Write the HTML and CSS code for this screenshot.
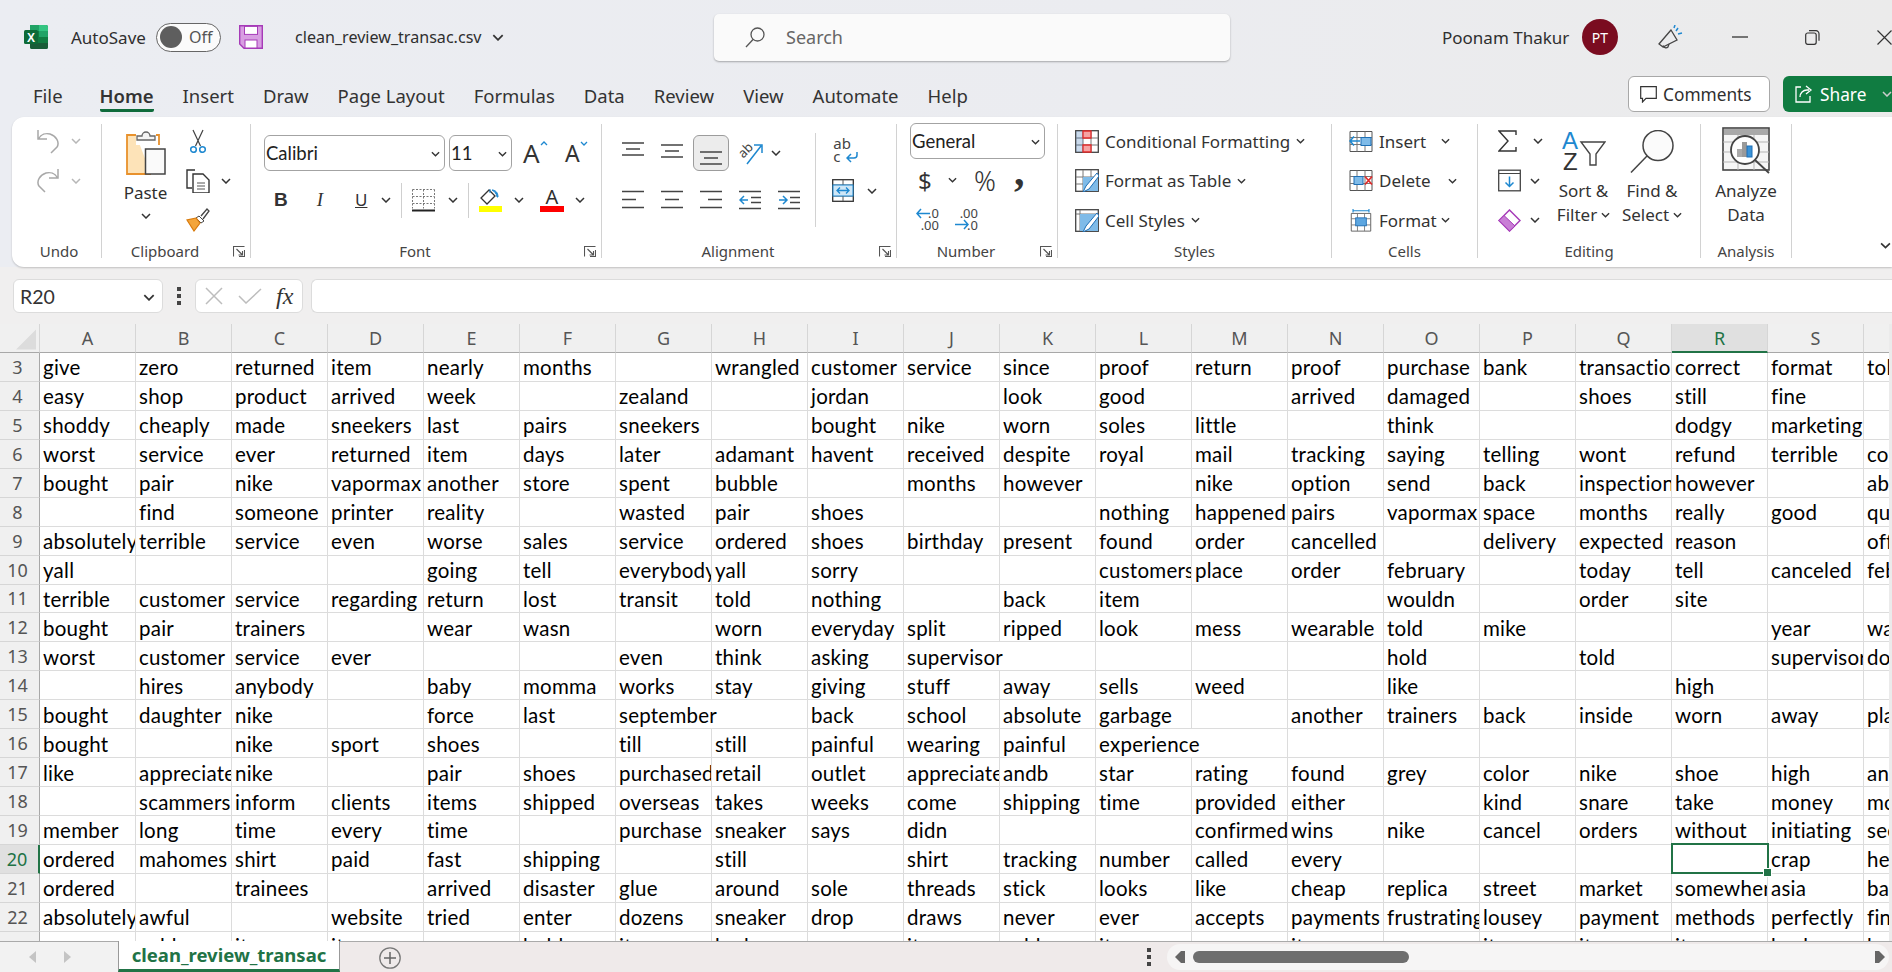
FILE: index.html
```html
<!DOCTYPE html>
<html lang="en">
<head>
<meta charset="utf-8">
<title>clean_review_transac.csv - Excel</title>
<link rel="stylesheet" href="styles.css">
</head>
<body>
<svg class="defs" aria-hidden="true">
  <symbol id="chev" viewBox="0 0 10 6"><path d="M1 1l4 4 4-4" fill="none" stroke="#333" stroke-width="1.5"/></symbol>
  <symbol id="launch" viewBox="0 0 12 11"><path d="M.5 10.500V.5h11M11.500 4v6.500H6M3.500 3l6 6M9.500 5v4h-4" fill="none" stroke="#555" stroke-width="1.1"/></symbol>
  <symbol id="lines-a" viewBox="0 0 22 20"><path d="M0 1.500h22M4 9.500h14M0 17.500h22" fill="none" stroke="#444" stroke-width="1.500"/></symbol>
  <symbol id="lines-l" viewBox="0 0 22 20"><path d="M0 1.500h22M0 9.500h14M0 17.500h22" fill="none" stroke="#444" stroke-width="1.500"/></symbol>
  <symbol id="lines-r" viewBox="0 0 22 20"><path d="M0 1.500h22M8 9.500h14M0 17.500h22" fill="none" stroke="#444" stroke-width="1.500"/></symbol>
  <symbol id="lines-v" viewBox="0 0 22 14"><path d="M0 1h22M4 7h14M0 13h22" fill="none" stroke="#444" stroke-width="1.500"/></symbol>
</svg>

<header class="title">
  <div class="title-left">
    <svg class="logo" viewBox="0 0 24 24"><rect x="6" width="18" height="24" rx="2" fill="#107c41"/><path d="M15 0h7a2 2 0 0 1 2 2v4h-9z" fill="#33c481"/><rect x="6" width="9" height="6" fill="#21a366"/><rect x="15" y="6" width="9" height="6" fill="#21a366"/><rect x="15" y="12" width="9" height="6" fill="#107c41"/><path d="M6 18h18v4a2 2 0 0 1-2 2H8a2 2 0 0 1-2-2z" fill="#185c37"/><rect y="5" width="14" height="14" rx="1.500" fill="#0e6b38"/><text x="7" y="16.500" class="logo-x">X</text></svg>
    <span class="autosave">AutoSave</span>
    <div class="toggle"><span class="knob"></span><span class="off">Off</span></div>
    <svg class="save" viewBox="0 0 24 24"><path d="M.7.700h22.600v22.600H5L.7 19z" fill="#d89ee2" stroke="#a63bb8" stroke-width="1.400"/><rect x="5.500" y="1.400" width="13" height="8" fill="#fff" stroke="#a63bb8"/><rect x="6" y="15" width="12" height="8" fill="#fff" stroke="#a63bb8"/></svg>
    <span class="filename">clean_review_transac.csv</span>
    <svg class="chev chev-file"><use href="#chev"/></svg>
  </div>
  <div class="search">
    <svg class="search-ico" viewBox="0 0 20 21"><circle cx="12.500" cy="7.500" r="6.500" fill="none" stroke="#555" stroke-width="1.300"/><path d="M8 12.500L1 20" stroke="#555" stroke-width="1.300"/></svg>
    <span>Search</span>
  </div>
  <div class="title-right">
    <span class="user">Poonam Thakur</span>
    <span class="avatar">PT</span>
    <svg class="feedback" viewBox="0 0 25 24"><path d="M13 5L1 19l4 3 14-7z" fill="none" stroke="#444" stroke-width="1.300"/><path d="M5 20.500a3 3 0 0 0 5 1.500l1-3" fill="none" stroke="#444" stroke-width="1.300"/><path d="M18 6l2-3M20 9l4-1M16 3l1-3" stroke="#1e88d0" stroke-width="1.500"/></svg>
    <svg class="minimize" viewBox="0 0 16 2"><path d="M0 1h16" stroke="#333" stroke-width="1.300"/></svg>
    <svg class="restore" viewBox="0 0 15 15"><rect x=".7" y="3" width="10.500" height="11.300" rx="2" fill="none" stroke="#333" stroke-width="1.200"/><path d="M4 .7h7a3 3 0 0 1 3 3v7" fill="none" stroke="#333" stroke-width="1.200"/></svg>
    <svg class="close" viewBox="0 0 15 15"><path d="M.5.500l14 14M14.500.500l-14 14" stroke="#333" stroke-width="1.200"/></svg>
  </div>
</header>

<nav class="tabs">
  <span class="tab">File</span>
  <span class="tab tab-on">Home</span>
  <span class="tab">Insert</span>
  <span class="tab">Draw</span>
  <span class="tab">Page Layout</span>
  <span class="tab">Formulas</span>
  <span class="tab">Data</span>
  <span class="tab">Review</span>
  <span class="tab">View</span>
  <span class="tab">Automate</span>
  <span class="tab">Help</span>
  <div class="tab-actions">
    <div class="btn-comments"><svg class="bubble" viewBox="0 0 17 17"><path d="M.7.700h15.600v11.600H6L2.500 16v-3.700H.7z" fill="none" stroke="#333" stroke-width="1.200"/></svg>Comments</div>
    <div class="btn-share"><svg class="share-ico" viewBox="0 0 18 18"><path d="M6 2H1v15h14v-6M5 12c0-4 3-7 7-7h2M11 1l5 4-5 4" fill="none" stroke="#fff" stroke-width="1.300"/></svg>Share<svg class="chev chev-share"><use href="#chev"/></svg></div>
  </div>
</nav>

<section class="ribbon">
  <div class="group g-undo">
    <div class="stack">
      <div class="row">
        <svg class="ico-undo" viewBox="0 0 22 25"><path d="M1 1v9h9M1.500 10C4 5 9 4 13 5c6 2 10 8 7 13l-6 6" fill="none" stroke="#a8a8a8" stroke-width="1.500"/></svg>
        <svg class="chev chev-grey"><use href="#chev"/></svg>
      </div>
      <div class="row">
        <svg class="ico-undo" viewBox="0 0 22 25"><path d="M21 1v9h-9M20.500 10C18 5 13 4 9 5 3 7-1 13 2 18l6 6" fill="none" stroke="#a8a8a8" stroke-width="1.500"/></svg>
        <svg class="chev chev-grey"><use href="#chev"/></svg>
      </div>
    </div>
    <div class="label">Undo</div>
  </div>

  <div class="group g-clip">
    <div class="clip-body">
      <div class="paste">
        <svg class="ico-paste" viewBox="0 0 40 45"><path d="M10 5H1v39h24" fill="#fde3b8" stroke="#e8912c" stroke-width="1.800"/><path d="M10 5h21v10H10z" fill="#fff"/><path d="M30 5h3v10" fill="none" stroke="#e8912c" stroke-width="1.800"/><path d="M11 10V6h5a4 4 0 0 1 8 0h5v4z" fill="#f4f4f4" stroke="#666" stroke-width="1.300"/><rect x="19.500" y="19" width="19.500" height="25" fill="#fafafa" stroke="#444" stroke-width="1.500"/></svg>
        <span class="paste-t">Paste</span>
        <svg class="chev"><use href="#chev"/></svg>
      </div>
      <div class="clip-tools">
        <svg class="ico-sc" viewBox="0 0 16 24"><path d="M3 1l7.500 16M13 1L5.500 17" stroke="#444" stroke-width="1.200" fill="none"/><circle cx="3.500" cy="20.500" r="2.800" fill="none" stroke="#1e88d0" stroke-width="1.500"/><circle cx="12.500" cy="20.500" r="2.800" fill="none" stroke="#1e88d0" stroke-width="1.500"/></svg>
        <div class="row"><svg class="ico-cp" viewBox="0 0 24 24"><path d="M9 1H1v18h5" fill="none" stroke="#333" stroke-width="1.400"/><path d="M7 5h10l6 6v13H7z" fill="#fff" stroke="#333" stroke-width="1.400"/><path d="M11 14h8M11 17h8M11 20h8" stroke="#555"/></svg><svg class="chev"><use href="#chev"/></svg></div>
        <svg class="ico-fp" viewBox="0 0 24 24"><path d="M13 8l5 5-3 2-5-5z" fill="#fff" stroke="#444"/><path d="M15 8l6-7 2 2-6 8" fill="none" stroke="#444" stroke-width="1.300"/><path d="M10 10L1 12l7 11 6-8z" fill="#f4a53a" stroke="#d87a0c" stroke-width="1.200"/></svg>
      </div>
    </div>
    <div class="label label-l">Clipboard<svg class="launch"><use href="#launch"/></svg></div>
  </div>

  <div class="group g-font">
    <div class="font-body">
      <div class="font-row">
        <div class="field f-name">Calibri<svg class="chev chev-end"><use href="#chev"/></svg></div>
        <div class="field f-size">11<svg class="chev chev-end"><use href="#chev"/></svg></div>
        <span class="grow">A<svg class="caret" viewBox="0 0 8 5"><path d="M1 4l3-3 3 3" fill="none" stroke="#1e88d0" stroke-width="1.300"/></svg></span>
        <span class="shrink">A<svg class="caret" viewBox="0 0 8 5"><path d="M1 1l3 3 3-3" fill="none" stroke="#1e88d0" stroke-width="1.300"/></svg></span>
      </div>
      <div class="font-row font-row2">
        <b class="fmt fmt-b">B</b>
        <i class="fmt fmt-i">I</i>
        <u class="fmt fmt-u">U</u>
        <svg class="chev"><use href="#chev"/></svg>
        <span class="vsep"></span>
        <svg class="ico-bd" viewBox="0 0 23 23"><path d="M.5.500h22M.5 7.500h22M.5 14.500h22M.5.500v19M11.500.500v19M22.500.500v19" fill="none" stroke="#777" stroke-dasharray="2 1.500"/><path d="M0 21.500h23" stroke="#222" stroke-width="2"/></svg>
        <svg class="chev"><use href="#chev"/></svg>
        <span class="vsep"></span>
        <div class="swatch"><svg class="ico-fill" viewBox="0 0 23 17"><path d="M10 2L2 10l6 6 8-8z" fill="#fff" stroke="#333" stroke-width="1.300"/><path d="M11 5V1M18 9c0-3-3-6-5-7 3 0 6 2 6 7z" fill="#1e88d0" stroke="#1e88d0"/></svg><span class="bar bar-y"></span></div>
        <svg class="chev"><use href="#chev"/></svg>
        <div class="swatch swatch-a"><span class="a-glyph">A</span><span class="bar bar-r"></span></div>
        <svg class="chev"><use href="#chev"/></svg>
      </div>
    </div>
    <div class="label label-l">Font<svg class="launch"><use href="#launch"/></svg></div>
  </div>

  <div class="group g-align">
    <div class="align-body">
      <div class="align-grid">
        <svg class="ic22 up" viewBox="0 0 22 14"><use href="#lines-v"/></svg>
        <svg class="ic22 mid" viewBox="0 0 22 14"><use href="#lines-v"/></svg>
        <div class="pressed"><svg class="ic22" viewBox="0 0 22 14"><use href="#lines-v"/></svg></div>
        <div class="orient"><svg class="ico-or" viewBox="0 0 25 24"><text x="2" y="14" class="or-t" transform="rotate(-45 8 12)">ab</text><path d="M9 23L23 5M16 4h8v8" fill="none" stroke="#1e88d0" stroke-width="1.500"/></svg><svg class="chev"><use href="#chev"/></svg></div>
        <span></span>
        <svg class="ic22" viewBox="0 0 22 20"><use href="#lines-l"/></svg>
        <svg class="ic22" viewBox="0 0 22 20"><use href="#lines-a"/></svg>
        <svg class="ic22" viewBox="0 0 22 20"><use href="#lines-r"/></svg>
        <svg class="ic22" viewBox="0 0 22 20"><path d="M0 1.500h22M12 7.500h10M12 12.500h10M0 18.500h22" fill="none" stroke="#444" stroke-width="1.500"/><path d="M9 10H1M5 6l-4 4 4 4" fill="none" stroke="#1e88d0" stroke-width="1.500"/></svg>
        <svg class="ic22" viewBox="0 0 22 20"><path d="M0 1.500h22M12 7.500h10M12 12.500h10M0 18.500h22" fill="none" stroke="#444" stroke-width="1.500"/><path d="M1 10h8M5 6l4 4-4 4" fill="none" stroke="#1e88d0" stroke-width="1.500"/></svg>
      </div>
      <div class="wrap-col">
        <div class="wrap-ico"><span class="wrap-t">ab<br>c</span><svg class="wrap-arrow" viewBox="0 0 12 11"><path d="M11 0v3a3 3 0 0 1-3 3H1M5 2L1 6l4 4" fill="none" stroke="#1e88d0" stroke-width="1.500"/></svg></div>
        <div class="row merge-row"><svg class="ico-mg" viewBox="0 0 22 23"><rect x=".7" y=".7" width="20.600" height="21.600" fill="#fff" stroke="#333" stroke-width="1.300"/><path d="M11 1v5M1 6h20M1 17h20M11 17v5" stroke="#555"/><rect x="1" y="6" width="20" height="11" fill="#cfe7f7" stroke="#1e88d0"/><path d="M5 11.500h12M8 8.500l-3 3 3 3M14 8.500l3 3-3 3" fill="none" stroke="#1e88d0" stroke-width="1.300"/></svg><svg class="chev"><use href="#chev"/></svg></div>
      </div>
    </div>
    <div class="label label-l">Alignment<svg class="launch"><use href="#launch"/></svg></div>
  </div>

  <div class="group g-num">
    <div class="num-body">
      <div class="field f-num">General<svg class="chev chev-end"><use href="#chev"/></svg></div>
      <div class="num-row">
        <span class="dollar">$</span><svg class="chev"><use href="#chev"/></svg>
        <span class="pct">%</span><span class="comma">,</span>
      </div>
      <div class="num-row num-row3">
        <div class="dec"><svg class="dec-a" viewBox="0 0 14 11"><path d="M14 5.500H1M5 1L1 5.500 5 10" fill="none" stroke="#1e88d0" stroke-width="1.500"/></svg><span class="dec-1">.0</span><span class="dec-2">.00</span></div>
        <div class="dec dec-next"><span class="dec-1">.00</span><svg class="dec-a dec-a2" viewBox="0 0 14 11"><path d="M0 5.500h13M9 1l4 4.500L9 10" fill="none" stroke="#1e88d0" stroke-width="1.500"/></svg><span class="dec-2">.0</span></div>
      </div>
    </div>
    <div class="label label-l">Number<svg class="launch"><use href="#launch"/></svg></div>
  </div>

  <div class="group g-styles">
    <div class="stack">
      <div class="row line"><svg class="ico-cell" viewBox="0 0 24 23"><rect x=".7" y=".7" width="22.600" height="21.600" fill="#fff" stroke="#444" stroke-width="1.300"/><path d="M8 1v21M16 1v21M1 8h22M1 15h22" stroke="#777"/><rect x="1" y="1" width="7" height="21" fill="#2b6cb3" opacity=".25"/><path d="M8 1h8v7H8zM8 15h8v7H8z" fill="#f5a3a3" stroke="#e12b2b" stroke-width="1.300"/></svg>Conditional Formatting<svg class="chev"><use href="#chev"/></svg></div>
      <div class="row line"><svg class="ico-cell" viewBox="0 0 24 23"><rect x=".7" y=".7" width="22.600" height="21.600" fill="#fff" stroke="#444" stroke-width="1.300"/><path d="M8 1v21M16 1v21M1 8h22M1 15h22" stroke="#777"/><path d="M8 8h15v14H8z" fill="#7fbbe8"/><path d="M22 4L11 17l-3 6 6-3L24 7z" fill="#fff" stroke="#1e6fb5"/></svg>Format as Table<svg class="chev"><use href="#chev"/></svg></div>
      <div class="row line"><svg class="ico-cell" viewBox="0 0 24 23"><rect x=".7" y=".7" width="22.600" height="21.600" fill="#fff" stroke="#444" stroke-width="1.300"/><path d="M5 1v21M1 5h22" stroke="#777"/><path d="M5 5h18v17H5z" fill="#7fbbe8"/><path d="M22 4L11 17l-3 6 6-3L24 7z" fill="#fff" stroke="#1e6fb5"/></svg>Cell Styles<svg class="chev"><use href="#chev"/></svg></div>
    </div>
    <div class="label">Styles</div>
  </div>

  <div class="group g-cells">
    <div class="stack">
      <div class="row line"><svg class="ico-cell" viewBox="0 0 24 22"><path d="M1 1h22v20H1z" fill="#fff" stroke="#555"/><path d="M8 1v20M16 1v20M1 7h22M1 14h22" stroke="#777"/><rect x="12" y="7" width="10" height="8" fill="#7fbbe8" stroke="#1e6fb5"/><path d="M11 10.500H1M5 6l-4 4.500L5 15" fill="none" stroke="#1e88d0" stroke-width="1.600"/></svg>Insert<svg class="chev chev-ins"><use href="#chev"/></svg></div>
      <div class="row line"><svg class="ico-cell" viewBox="0 0 24 22"><path d="M1 1h22v20H1z" fill="#fff" stroke="#555"/><path d="M8 1v20M16 1v20M1 7h22M1 14h22" stroke="#777"/><rect x="5" y="7" width="9" height="8" fill="#7fbbe8" stroke="#1e6fb5"/><path d="M16 7l7 8M23 7l-7 8" stroke="#e12b2b" stroke-width="1.700"/></svg>Delete<svg class="chev chev-del"><use href="#chev"/></svg></div>
      <div class="row line"><svg class="ico-cell" viewBox="0 0 24 26"><path d="M1 5h22v20H1z" fill="#fff" stroke="#555"/><path d="M8 5v20M16 5v20M1 11h22M1 18h22" stroke="#777"/><rect x="6" y="10" width="12" height="9" fill="#5da6e0" stroke="#1e6fb5"/><path d="M3 2h18M3 0v4M21 0v4" stroke="#1e88d0" stroke-width="1.300"/></svg>Format<svg class="chev chev-fmt"><use href="#chev"/></svg></div>
    </div>
    <div class="label">Cells</div>
  </div>

  <div class="group g-edit">
    <div class="edit-body">
      <div class="stack stack-edit">
        <div class="row"><svg class="ico-sum" viewBox="0 0 19 22"><path d="M18 5V1H1l9 10-9 10h17v-4" fill="none" stroke="#333" stroke-width="1.400"/></svg><svg class="chev"><use href="#chev"/></svg></div>
        <div class="row"><svg class="ico-fd" viewBox="0 0 23 22"><rect x=".7" y=".7" width="21.600" height="20.600" fill="#fff" stroke="#444" stroke-width="1.300"/><path d="M1 4h21" stroke="#444"/><path d="M11.500 7v10M7.500 13l4 4 4-4" fill="none" stroke="#1e88d0" stroke-width="1.500"/></svg><svg class="chev"><use href="#chev"/></svg></div>
        <div class="row"><svg class="ico-fd" viewBox="0 0 23 23"><path d="M11.500 1L22 11.500 11.500 22 1 11.500z" fill="#fff" stroke="#a63bb8" stroke-width="1.500"/><path d="M6 6.500L17 17l-5.500 5L1 11.500z" fill="#c97ed6" stroke="#a63bb8"/></svg><svg class="chev"><use href="#chev"/></svg></div>
      </div>
      <div class="big big-sort">
        <svg class="ico-big-s" viewBox="0 0 44 40"><text x="0" y="18" class="az az-a">A</text><text x="1" y="39" class="az">Z</text><path d="M19 11h24L34 23v11h-6V23z" fill="#fff" stroke="#444" stroke-width="1.400"/></svg>
        <span>Sort &amp;</span>
        <span class="big-l2">Filter<svg class="chev"><use href="#chev"/></svg></span>
      </div>
      <div class="big big-find">
        <svg class="ico-big-f" viewBox="0 0 44 43"><circle cx="28" cy="15.500" r="15" fill="#fbfbfb" stroke="#444" stroke-width="1.500"/><path d="M17 26L1 42.500" stroke="#444" stroke-width="1.500"/></svg>
        <span>Find &amp;</span>
        <span class="big-l2">Select<svg class="chev"><use href="#chev"/></svg></span>
      </div>
    </div>
    <div class="label">Editing</div>
  </div>

  <div class="group g-an">
    <div class="big big-an">
      <svg class="ico-an" viewBox="0 0 48 47"><rect x="1" y="1" width="46" height="42" fill="#f6f6f6" stroke="#444" stroke-width="1.600"/><rect x="2" y="2" width="44" height="6" fill="#a9a9a9"/><path d="M1 15h46M1 25h46M1 35h46M16 8v35M32 8v35" stroke="#b5b5b5"/><circle cx="23" cy="23" r="14" fill="#fff" stroke="#444" stroke-width="1.800"/><rect x="15" y="22" width="5" height="8" fill="#aaa"/><rect x="20" y="15" width="5" height="15" fill="#9a9a9a"/><rect x="25" y="19" width="5" height="11" fill="#3a93d8" stroke="#1e6fb5"/><path d="M33 33l14 13" stroke="#444" stroke-width="1.800"/></svg>
      <span>Analyze</span>
      <span class="big-l2">Data</span>
    </div>
    <div class="label">Analysis</div>
  </div>

  <svg class="chev chev-collapse"><use href="#chev"/></svg>
</section>

<div class="fbar">
  <div class="namebox">R20<svg class="chev chev-name"><use href="#chev"/></svg></div>
  <div class="fdots"><span></span><span></span><span></span></div>
  <div class="fbtns">
    <svg class="fx-x" viewBox="0 0 18 18"><path d="M1 1l16 16M17 1L1 17" stroke="#bdbdbd" stroke-width="1.500"/></svg>
    <svg class="fx-c" viewBox="0 0 24 16"><path d="M1 8l7 7L23 1" fill="none" stroke="#bdbdbd" stroke-width="1.500"/></svg>
    <span class="fx">fx</span>
  </div>
  <div class="finput"></div>
</div>

<main class="sheet">
<table>
<colgroup><col class="c-h"><col class="c-d" span="20"></colgroup>
<thead>
<tr><th class="corner"><svg class="tri" viewBox="0 0 20 20"><path d="M20 0v20H0z" fill="#dcdcdc"/></svg></th><th>A</th><th>B</th><th>C</th><th>D</th><th>E</th><th>F</th><th>G</th><th>H</th><th>I</th><th>J</th><th>K</th><th>L</th><th>M</th><th>N</th><th>O</th><th>P</th><th>Q</th><th class="on-col">R</th><th>S</th><th></th></tr>
</thead>
<tbody>
<tr><th>3</th><td>give</td><td>zero</td><td>returned</td><td>item</td><td>nearly</td><td>months</td><td></td><td>wrangled</td><td>customer</td><td>service</td><td>since</td><td>proof</td><td>return</td><td>proof</td><td>purchase</td><td>bank</td><td>transaction</td><td>correct</td><td>format</td><td>told</td></tr>
<tr><th>4</th><td>easy</td><td>shop</td><td>product</td><td>arrived</td><td>week</td><td></td><td>zealand</td><td></td><td>jordan</td><td></td><td>look</td><td>good</td><td></td><td>arrived</td><td>damaged</td><td></td><td>shoes</td><td>still</td><td>fine</td><td></td></tr>
<tr><th>5</th><td>shoddy</td><td>cheaply</td><td>made</td><td>sneekers</td><td>last</td><td>pairs</td><td>sneekers</td><td></td><td>bought</td><td>nike</td><td>worn</td><td>soles</td><td>little</td><td></td><td>think</td><td></td><td></td><td>dodgy</td><td>marketing</td><td></td></tr>
<tr><th>6</th><td>worst</td><td>service</td><td>ever</td><td>returned</td><td>item</td><td>days</td><td>later</td><td>adamant</td><td>havent</td><td>received</td><td>despite</td><td>royal</td><td>mail</td><td>tracking</td><td>saying</td><td>telling</td><td>wont</td><td>refund</td><td>terrible</td><td>could</td></tr>
<tr><th>7</th><td>bought</td><td>pair</td><td>nike</td><td>vapormax</td><td>another</td><td>store</td><td>spent</td><td>bubble</td><td></td><td>months</td><td>however</td><td></td><td>nike</td><td>option</td><td>send</td><td>back</td><td>inspection</td><td>however</td><td></td><td>about</td></tr>
<tr><th>8</th><td></td><td>find</td><td>someone</td><td>printer</td><td>reality</td><td></td><td>wasted</td><td>pair</td><td>shoes</td><td></td><td></td><td>nothing</td><td>happened</td><td>pairs</td><td>vapormax</td><td>space</td><td>months</td><td>really</td><td>good</td><td>quality</td></tr>
<tr><th>9</th><td>absolutely</td><td>terrible</td><td>service</td><td>even</td><td>worse</td><td>sales</td><td>service</td><td>ordered</td><td>shoes</td><td>birthday</td><td>present</td><td>found</td><td>order</td><td>cancelled</td><td></td><td>delivery</td><td>expected</td><td>reason</td><td></td><td>offer</td></tr>
<tr><th>10</th><td>yall</td><td></td><td></td><td></td><td>going</td><td>tell</td><td>everybody</td><td>yall</td><td>sorry</td><td></td><td></td><td>customers</td><td>place</td><td>order</td><td>february</td><td></td><td>today</td><td>tell</td><td>canceled</td><td>february</td></tr>
<tr><th>11</th><td>terrible</td><td>customer</td><td>service</td><td>regarding</td><td>return</td><td>lost</td><td>transit</td><td>told</td><td>nothing</td><td></td><td>back</td><td>item</td><td></td><td></td><td>wouldn</td><td></td><td>order</td><td>site</td><td></td><td></td></tr>
<tr><th>12</th><td>bought</td><td>pair</td><td>trainers</td><td></td><td>wear</td><td>wasn</td><td></td><td>worn</td><td>everyday</td><td>split</td><td>ripped</td><td>look</td><td>mess</td><td>wearable</td><td>told</td><td>mike</td><td></td><td></td><td>year</td><td>wait</td></tr>
<tr><th>13</th><td>worst</td><td>customer</td><td>service</td><td>ever</td><td></td><td></td><td>even</td><td>think</td><td>asking</td><td colspan="2">supervisor</td><td></td><td></td><td></td><td>hold</td><td></td><td>told</td><td></td><td>supervisor</td><td>done</td></tr>
<tr><th>14</th><td></td><td>hires</td><td>anybody</td><td></td><td>baby</td><td>momma</td><td>works</td><td>stay</td><td>giving</td><td>stuff</td><td>away</td><td>sells</td><td>weed</td><td></td><td>like</td><td></td><td></td><td>high</td><td></td><td></td></tr>
<tr><th>15</th><td>bought</td><td>daughter</td><td>nike</td><td></td><td>force</td><td>last</td><td colspan="2">september</td><td>back</td><td>school</td><td>absolute</td><td>garbage</td><td></td><td>another</td><td>trainers</td><td>back</td><td>inside</td><td>worn</td><td>away</td><td>place</td></tr>
<tr><th>16</th><td>bought</td><td></td><td>nike</td><td>sport</td><td>shoes</td><td></td><td>till</td><td>still</td><td>painful</td><td>wearing</td><td>painful</td><td colspan="2">experience</td><td></td><td></td><td></td><td></td><td></td><td></td><td></td></tr>
<tr><th>17</th><td>like</td><td>appreciate</td><td>nike</td><td></td><td>pair</td><td>shoes</td><td>purchased</td><td>retail</td><td>outlet</td><td>appreciate</td><td>andb</td><td>star</td><td>rating</td><td>found</td><td>grey</td><td>color</td><td>nike</td><td>shoe</td><td>high</td><td>and</td></tr>
<tr><th>18</th><td></td><td>scammers</td><td>inform</td><td>clients</td><td>items</td><td>shipped</td><td>overseas</td><td>takes</td><td>weeks</td><td>come</td><td>shipping</td><td>time</td><td>provided</td><td>either</td><td></td><td>kind</td><td>snare</td><td>take</td><td>money</td><td>more</td></tr>
<tr><th>19</th><td>member</td><td>long</td><td>time</td><td>every</td><td>time</td><td></td><td>purchase</td><td>sneaker</td><td>says</td><td>didn</td><td></td><td></td><td>confirmed</td><td>wins</td><td>nike</td><td>cancel</td><td>orders</td><td>without</td><td>initiating</td><td>seen</td></tr>
<tr><th class="on-row">20</th><td>ordered</td><td>mahomes</td><td>shirt</td><td>paid</td><td>fast</td><td>shipping</td><td></td><td>still</td><td></td><td>shirt</td><td>tracking</td><td>number</td><td>called</td><td>every</td><td></td><td></td><td></td><td class="sel"></td><td>crap</td><td>help</td></tr>
<tr><th>21</th><td>ordered</td><td></td><td>trainees</td><td></td><td>arrived</td><td>disaster</td><td>glue</td><td>around</td><td>sole</td><td>threads</td><td>stick</td><td>looks</td><td>like</td><td>cheap</td><td>replica</td><td>street</td><td>market</td><td>somewhere</td><td>asia</td><td>back</td></tr>
<tr><th>22</th><td>absolutely</td><td>awful</td><td></td><td>website</td><td>tried</td><td>enter</td><td>dozens</td><td>sneaker</td><td>drop</td><td>draws</td><td>never</td><td>ever</td><td>accepts</td><td>payments</td><td>frustrating</td><td>lousey</td><td>payment</td><td>methods</td><td>perfectly</td><td>find</td></tr>
<tr><th></th><td></td><td>sold</td><td>item</td><td>item</td><td></td><td>hold</td><td>item</td><td>bad</td><td></td><td>item</td><td>sold</td><td>item</td><td></td><td>item</td><td></td><td>item</td><td>item</td><td>item</td><td>back</td><td>hold</td></tr>
</tbody>
</table>
</main>

<footer class="bottom">
  <div class="nav-arrows">
    <svg class="tri-l" viewBox="0 0 7 12"><path d="M7 0v12L0 6z" fill="#c4c4c4"/></svg>
    <svg class="tri-l" viewBox="0 0 7 12"><path d="M0 0v12l7-6z" fill="#c4c4c4"/></svg>
  </div>
  <div class="sheet-tab">clean_review_transac</div>
  <svg class="plus" viewBox="0 0 22 22"><circle cx="11" cy="11" r="10.200" fill="none" stroke="#777" stroke-width="1.300"/><path d="M11 5v12M5 11h12" stroke="#666" stroke-width="1.500"/></svg>
  <div class="bottom-fill"><span></span><span></span><span></span></div>
  <div class="hscroll">
    <svg class="sb-l" viewBox="0 0 10 12"><path d="M10 0v12H6L0 6l6-6z" fill="#666"/></svg>
    <span class="thumb"></span>
    <svg class="sb-r" viewBox="0 0 10 12"><path d="M0 0v12h4l6-6-6-6z" fill="#666"/></svg>
  </div>
</footer>
</body>
</html>
```

FILE: styles.css
```css
* { box-sizing: border-box; }
html, body { margin: 0; padding: 0; }
body {
  width: 1892px; height: 972px; overflow: hidden;
  background: linear-gradient(90deg, #ebedf2 0%, #ebecf0 60%, #ebebeb 100%);
  font-family: "Noto Sans", "Open Sans", sans-serif;
  color: #2f2f2f;
  font-size: 17px;
}
svg { display: block; flex: none; }
.defs { width: 0; height: 0; position: absolute; }
.chev { width: 10px; height: 6px; }
.chev-grey { opacity: .35; margin-left: 12px; }

.title { height: 74px; display: flex; align-items: center; }
.title-left { width: 714px; display: flex; align-items: center; padding-left: 24px; }
.logo { width: 24px; height: 24px; }
.logo-x { font: bold 12px "Liberation Sans", sans-serif; fill: #fff; text-anchor: middle; }
.autosave { margin-left: 23px; width: 85px; }
.toggle { width: 65px; height: 29px; border: 1px solid #666; border-radius: 15px; background: #fbfbfb; display: flex; align-items: center; padding-left: 3px; }
.knob { width: 22px; height: 22px; border-radius: 50%; background: #5e5e5e; }
.off { margin-left: 7px; font-size: 16px; color: #555; }
.save { width: 24px; height: 24px; margin-left: 18px; }
.filename { margin-left: 32px; width: 197px; white-space: nowrap; font-size: 16.100px; }
.chev-file { width: 12px; height: 7px; }
.search { width: 516px; height: 47px; background: #fafafa; border-radius: 5px; box-shadow: 0 1px 2px rgba(0,0,0,.3); display: flex; align-items: center; padding-left: 31px; font-size: 18px; color: #666; }
.search-ico { width: 20px; height: 21px; margin-right: 21px; }
.title-right { flex: 1; display: flex; align-items: center; padding-left: 212px; }
.user { width: 140px; white-space: nowrap; }
.avatar { width: 36px; height: 36px; border-radius: 50%; background: #7a0c20; color: #fff; font-size: 14px; display: flex; align-items: center; justify-content: center; }
.feedback { width: 25px; height: 24px; margin-left: 40px; }
.minimize { width: 16px; height: 2px; margin-left: 49px; }
.restore { width: 15px; height: 15px; margin-left: 57px; }
.close { width: 15px; height: 15px; margin-left: 57px; }

.tabs { height: 43px; display: flex; align-items: flex-start; padding: 9px 0 0 33px; font-size: 18.500px; gap: 29px; }
.tab { line-height: 25px; height: 29px; border-bottom: 3px solid transparent; white-space: nowrap; color: #333; }
.tab-on { font-weight: 600; border-bottom-color: #0e6b3b; border-radius: 0 0 2px 2px; margin-left: 8px; }
.tab-actions { margin-left: auto; display: flex; gap: 13px; margin-top: -7px; font-size: 17.300px; }
.btn-comments { width: 142px; height: 36px; border: 1px solid #a8a8a8; border-radius: 6px; background: #fff; display: flex; align-items: center; padding-left: 11px; gap: 6px; }
.bubble { width: 17px; height: 17px; }
.btn-share { width: 109px; height: 36px; background: #107c41; border-radius: 6px 0 0 6px; color: #fff; display: flex; align-items: center; padding-left: 12px; gap: 7px; }
.share-ico { width: 18px; height: 18px; }
.chev-share { margin-left: 9px; filter: invert(1); }

.ribbon { height: 150px; margin-left: 12px; background: #fff; border-radius: 12px 0 0 12px; box-shadow: 0 1px 2px rgba(0,0,0,.2); display: flex; padding-top: 7px; position: relative; }
.group { height: 134px; border-right: 1px solid #d2d2d2; display: flex; flex-direction: column; flex: none; position: relative; }
.group > :first-child { flex: 1; min-height: 0; }
.label { height: 17px; font-size: 15px; line-height: 21px; text-align: center; color: #444; white-space: nowrap; }
.label-l { padding-right: 22px; }
.g-undo .label { padding-left: 5px; }
.launch { width: 12px; height: 11px; position: absolute; right: 5px; bottom: 1px; }
.g-undo { width: 90px; }
.g-clip { width: 149px; }
.g-font { width: 351px; }
.g-align { width: 295px; }
.g-num { width: 161px; }
.g-styles { width: 274px; }
.g-cells { width: 146px; }
.g-edit { width: 223px; }
.g-an { width: 91px; }
.stack { display: grid; grid-auto-rows: 34px; row-gap: 5.500px; align-content: start; }
.row { display: flex; align-items: center; }
.g-undo .stack { padding-left: 25px; }
.ico-undo { width: 22px; height: 25px; }

.clip-body { display: flex; }
.paste { width: 84px; display: flex; flex-direction: column; align-items: center; padding: 6px 0 0 3px; }
.ico-paste { width: 40px; height: 45px; }
.paste-t { margin-top: 6px; font-size: 17px; line-height: 24px; }
.paste .chev { margin-top: 8px; }
.clip-tools { display: grid; grid-auto-rows: 34px; row-gap: 5.500px; }
.clip-tools > svg { align-self: center; }
.clip-tools .row .chev { margin-left: 11px; }
.ico-sc { width: 16px; height: 24px; margin-left: 4px; }
.ico-cp { width: 24px; height: 24px; }
.ico-fp { width: 24px; height: 24px; }

.font-body { padding: 11px 0 0 13px; }
.font-row { display: flex; align-items: center; height: 36px; }
.font-row2 { margin-top: 11px; }
.field { height: 36px; border: 1px solid #a3a3a3; border-radius: 6px; display: flex; align-items: center; padding-left: 1px; font-family: "Lato", sans-serif; font-size: 18.500px; color: #222; position: relative; }
.chev-end { position: absolute; right: 4px; top: 15px; width: 9px; }
.f-name { width: 181px; }
.f-size { width: 63px; margin-left: 4px; }
.grow, .shrink { position: relative; font-size: 26px; line-height: 36px; font-weight: 400; color: #333; display: flex; }
.grow { margin-left: 11px; width: 23px; }
.shrink { margin-left: 19px; width: 20px; font-size: 23px; }
.caret { width: 8px; height: 5px; margin-top: 6px; }
.fmt { color: #333; font-size: 19px; width: 12px; text-align: center; line-height: 24px; font-family: "Liberation Sans", sans-serif; }
.fmt-b { margin-left: 10px; font-weight: 700; }
.fmt-i { margin-left: 28px; font-family: "Liberation Serif", serif; }
.fmt-u { margin-left: 29px; margin-right: 14px; font-family: "Noto Sans", sans-serif; font-size: 17px; }
.vsep { width: 1px; height: 35px; background: #cfcfcf; margin: 0 10px; }
.ico-bd { width: 23px; height: 23px; margin-right: 13px; }
.swatch { width: 23px; height: 24px; display: flex; flex-direction: column; margin-right: 12px; }
.swatch-a { width: 24px; margin: 0 11px 0 16px; }
.ico-fill { width: 23px; height: 17px; }
.bar { display: block; height: 6px; margin-top: 1px; }
.bar-y { background: #ffff00; }
.bar-r { background: #ff0000; margin-top: 0; }
.a-glyph { font-size: 20px; line-height: 18px; text-align: center; height: 18px; }

.align-body { display: flex; }
.align-grid { display: grid; grid-template-columns: repeat(5, 22px); column-gap: 17px; grid-template-rows: 36px 36px; row-gap: 11px; padding: 11px 0 0 20px; width: 214px; justify-items: center; align-items: center; }
.ic22 { width: 22px; height: 20px; }
.align-grid > .up { height: 14px; align-self: start; margin-top: 7px; }
.align-grid > .mid { height: 14px; margin-top: -4px; }
.pressed { width: 36px; height: 36px; margin: 0 -7px; background: #ececec; border: 1px solid #9c9c9c; border-radius: 6px; display: flex; align-items: flex-end; justify-content: center; padding-bottom: 5px; }
.pressed .ic22 { height: 14px; }
.orient { display: flex; align-items: center; gap: 8px; justify-self: start; margin-right: -30px; margin-left: -1px; }
.ico-or { width: 25px; height: 24px; }
.or-t { font: 13px "Noto Sans", sans-serif; fill: #444; }
.wrap-col { width: 81px; height: 94px; margin-top: 9px; border-left: 1px solid #d2d2d2; padding-left: 16px; display: flex; flex-direction: column; }
.wrap-ico { width: 28px; height: 24px; position: relative; margin: 4px 0 0 1px; }
.wrap-t { font-size: 15px; line-height: 13px; display: block; color: #444; }
.wrap-arrow { width: 12px; height: 11px; position: absolute; right: 3px; bottom: -2px; }
.merge-row { margin-top: 18px; gap: 13px; }
.ico-mg { width: 22px; height: 23px; }

.num-body { padding-left: 13px; display: flex; flex-direction: column; margin-top: -1px; }
.f-num { width: 135px; }
.num-row { display: flex; align-items: center; height: 34px; margin-top: 4px; padding-left: 8px; }
.dollar { font-size: 24px; width: 20px; color: #333; }
.num-row .chev { margin-left: 10px; width: 9px; }
.pct { font-size: 27px; margin-left: 17px; color: #333; font-weight: 300; }
.comma { font: bold 42px "Liberation Serif", serif; margin-left: 18px; margin-top: -19px; color: #333; line-height: 34px; }
.num-row3 { padding-left: 6px; gap: 16px; margin-top: 5px; }
.dec { width: 23px; height: 24px; position: relative; font-size: 13px; line-height: 12px; color: #444; }
.dec-1, .dec-2 { display: block; text-align: right; }
.dec-a { width: 14px; height: 11px; position: absolute; left: 0; top: 1px; }
.dec-a2 { top: 12px; }
.dec-next .dec-2 { margin-top: 0; }

.g-styles .stack, .g-cells .stack { padding-left: 17px; }
.line { font-size: 17px; gap: 6px; white-space: nowrap; color: #333; }
.line .chev { margin-left: 0; width: 9px; }
.ico-cell { width: 24px; height: 23px; }
.line .chev-ins { margin-left: 9px; }
.line .chev-del { margin-left: 11px; }
.line .chev-fmt { margin-left: -2px; }

.edit-body { display: flex; }
.stack-edit { width: 74px; padding-left: 20px; }
.stack-edit .row { gap: 9px; }
.ico-sum { width: 19px; height: 22px; margin-right: 7px; }
.ico-fd { width: 23px; height: 23px; }
.big { display: flex; flex-direction: column; align-items: center; font-size: 17px; line-height: 24px; white-space: nowrap; color: #333; }
.big-sort { width: 63px; padding-top: 7px; }
.big-find { width: 62px; padding-top: 6px; margin-left: 6px; }
.ico-big-s { width: 44px; height: 40px; margin-bottom: 8px; }
.ico-big-f { width: 44px; height: 43px; margin-bottom: 6px; }
.az { font: 24px "Liberation Sans", sans-serif; fill: #333; }
.az-a { fill: #1e88d0; }
.big-l2 { display: flex; align-items: center; gap: 4px; }
.big-l2 .chev { width: 9px; }
.big-an { padding-top: 3px; }
.ico-an { width: 48px; height: 47px; margin-bottom: 5px; }
.chev-collapse { position: absolute; right: 1px; bottom: 18px; width: 11px; height: 7px; }

.fbar { height: 57px; background: #f0efef; display: flex; padding-top: 12px; align-items: flex-start; }
.namebox { width: 150px; height: 34px; margin-left: 13px; background: #fff; border: 1px solid #dcdcdc; border-radius: 6px; display: flex; align-items: center; padding-left: 6px; font-family: "Lato", sans-serif; font-size: 19.500px; color: #333; position: relative; }
.chev-name { position: absolute; right: 7px; top: 14px; width: 12px; height: 7px; }
.fdots { width: 32px; height: 34px; display: flex; flex-direction: column; align-items: center; justify-content: center; gap: 3px; }
.fdots span, .bottom-fill span { width: 4px; height: 4px; background: #444; }
.fbtns { width: 108px; height: 34px; background: #fff; border: 1px solid #dcdcdc; border-radius: 6px; display: flex; align-items: center; padding-left: 9px; }
.fx-x { width: 18px; height: 18px; }
.fx-c { width: 24px; height: 16px; margin-left: 15px; }
.fx { font: italic 24px "Liberation Serif", serif; color: #333; margin-left: 14px; }
.finput { flex: 1; height: 34px; margin-left: 8px; background: #fff; border: 1px solid #dcdcdc; border-right: 0; border-radius: 6px 0 0 6px; }

.sheet { height: 617px; width: 1889px; overflow: hidden; background: #fff; }
table { table-layout: fixed; width: 1960px; border-collapse: separate; border-spacing: 0; font-family: "Lato", sans-serif; font-size: 20.500px; color: #000; }
.c-h { width: 40px; }
.c-d { width: 96px; }
thead tr { height: 29px; }
tbody tr { height: 28.950px; }
th { background: #f0f0f0; font-family: "Noto Sans", sans-serif; font-weight: 400; font-size: 18px; color: #555; border-right: 1px solid #d6d6d6; border-bottom: 1px solid #d6d6d6; padding: 0; text-align: center; overflow: hidden; }
thead th { border-bottom: 1px solid #a8a8a8; }
tbody th { border-right: 1px solid #a8a8a8; padding-right: 4px; }
td { padding: 1px 0 0 3px; line-height: 26px; letter-spacing: .25px; border-right: 1px solid #dcdcdc; border-bottom: 1px solid #dcdcdc; white-space: nowrap; overflow: hidden; }
.corner { position: relative; }
.tri { width: 20px; height: 21px; margin: 3px 0 0 16px; }
.on-col { background: #e0e0e0; color: #217346; border-bottom: 2px solid #217346; }
.on-row { background: #e0e0e0; color: #217346; border-right: 2px solid #217346; }
.sel { position: relative; overflow: visible; }
.sel::before { content: ""; position: absolute; left: -1px; top: -2px; right: -2px; bottom: -1px; border: 2px solid #217346; }
.sel::after { content: ""; position: absolute; right: -4px; bottom: -3px; width: 7px; height: 7px; background: #217346; border: 1px solid #fff; box-sizing: content-box; margin: -1px; }

.bottom { height: 31px; display: flex; align-items: flex-start; background: #efeaea; border-top: 1px solid #aaa; width: 1892px; }
.bottom > * { flex: none; }
.nav-arrows { width: 118px; height: 30px; background: #f2f2f2; display: flex; align-items: center; padding-left: 29px; gap: 28px; }
.tri-l { width: 7px; height: 12px; }
.sheet-tab { width: 222px; height: 31px; background: #fff; border: 1px solid #999; border-top: 0; border-bottom: 3px solid #217346; color: #217346; font-weight: 700; font-size: 18.500px; line-height: 26px; text-align: center; white-space: nowrap; overflow: hidden; margin-top: -1px; padding-top: 1px; }
.plus { width: 22px; height: 22px; margin: 5px 0 0 39px; }
.bottom-fill { width: 751px; height: 30px; display: flex; flex-direction: column; align-items: flex-end; justify-content: center; gap: 3px; padding-right: 1px; }
.hscroll { width: 722px; height: 26px; margin: 2px 0 0 15px; background: #f6f5f5; border-radius: 13px; display: flex; align-items: center; padding-left: 8px; }
.sb-l, .sb-r { width: 10px; height: 12px; }
.thumb { width: 216px; height: 12px; margin-left: 8px; background: #6e6e6e; border-radius: 6px; }
.sb-r { margin-left: 466px; }
```
